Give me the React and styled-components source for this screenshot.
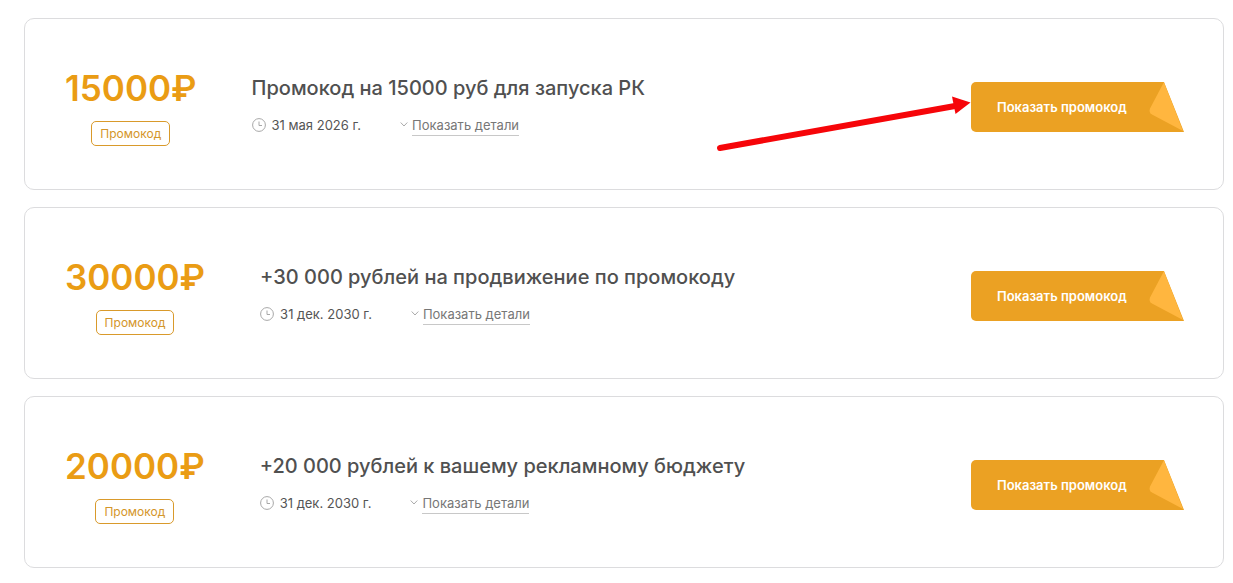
import React from "react";
import styled, { createGlobalStyle } from "styled-components";

const GlobalStyle = createGlobalStyle`
  *, *::before, *::after { box-sizing: border-box; }
  body {
    margin: 0;
    background: #fff;
    color: #505050;
    font-family: Inter, "Liberation Sans", sans-serif;
  }
`;

const List = styled.main`
  display: flex;
  flex-direction: column;
  gap: 17px;
  padding: 18px 9px 15px 24px;
`;

const Card = styled.article`
  display: flex;
  align-items: center;
  padding: 47px 39px 43px 40px;
  border: 1px solid #dcdcde;
  border-radius: 10px;
`;

const Offer = styled.div`
  display: flex;
  flex-direction: column;
  align-items: center;
  gap: 10px;
  margin-right: 55px;
`;

const Amount = styled.div`
  color: #ea9c14;
  font-size: 35px;
  font-weight: 600;
  line-height: 45px;
`;

const Badge = styled.span`
  padding: 0 8px;
  border: 1px solid #d99a2b;
  border-radius: 5px;
  color: #d4962a;
  font-size: 12px;
  line-height: 23px;
`;

const Details = styled.div`
  flex: 1;
  min-width: 0;
  padding-bottom: 2px;
`;

const Title = styled.h2`
  margin: 0 0 14px;
  font-size: 20px;
  font-weight: 500;
  line-height: 26px;
`;

const Meta = styled.div`
  display: flex;
  align-items: flex-start;
  gap: 39px;
  font-size: 13px;
  line-height: 20px;
`;

const Expiry = styled.span`
  display: flex;
  align-items: center;
  gap: 6px;
  color: #555;
`;

const Toggle = styled.button`
  display: flex;
  align-items: center;
  gap: 4px;
  padding: 0;
  border: 0;
  background: none;
  color: #777;
  font: inherit;
  cursor: pointer;
`;

const ToggleLabel = styled.span`
  border-bottom: 1px solid #c8c8c8;
`;

const Action = styled.div`
  position: relative;
  flex: none;
  margin-top: 2px;
`;

const RevealButton = styled.button`
  display: flex;
  width: 213px;
  height: 50px;
  padding: 0 0 0 26px;
  align-items: center;
  justify-content: space-between;
  border: 0;
  border-radius: 5px 0 0 5px;
  background: #eba123;
  clip-path: polygon(0 0, 193px 0, 100% 100%, 0 100%);
  color: #fff;
  font-family: inherit;
  font-size: 13px;
  font-weight: 600;
  cursor: pointer;
`;

const Pointer = styled.svg`
  position: absolute;
  right: 100%;
  top: 10px;
  pointer-events: none;
`;

const ClockIcon = () => (
  <svg width="14" height="14" viewBox="0 0 14 14" fill="none" stroke="#a8a8a8" aria-hidden="true">
    <circle cx="7" cy="7" r="6.4" />
    <path d="M7 3.5V7.5H10" />
  </svg>
);

const ChevronIcon = () => (
  <svg width="8" height="20" viewBox="0 0 8 20" fill="none" stroke="#aaa" aria-hidden="true">
    <path d="M0.7 7.5L4 11L7.3 7.5" />
  </svg>
);

const FoldedCorner = () => (
  <svg width="36" height="50" viewBox="0 0 36 50" aria-hidden="true">
    <path d="M16 0L35 49L4 32.5Q0.5 30.5 2 26.5Z" fill="#ffb63f" />
  </svg>
);

const Arrow = () => (
  <Pointer width="256" height="64" viewBox="0 0 256 64" aria-hidden="true">
    <path d="M5 56L240 14" stroke="#f60509" strokeWidth="6" strokeLinecap="round" />
    <path d="M237 4.5L255.500 10.500L240.500 22Z" fill="#f60509" />
  </Pointer>
);

const promos = [
  { amount: "15000₽", title: "Промокод на 15000 руб для запуска РК", date: "31 мая 2026 г.", pointed: true },
  { amount: "30000₽", title: "+30 000 рублей на продвижение по промокоду", date: "31 дек. 2030 г." },
  { amount: "20000₽", title: "+20 000 рублей к вашему рекламному бюджету", date: "31 дек. 2030 г." },
];

const PromoCard = ({ amount, title, date, pointed }) => (
  <Card>
    <Offer>
      <Amount>{amount}</Amount>
      <Badge>Промокод</Badge>
    </Offer>
    <Details>
      <Title>{title}</Title>
      <Meta>
        <Expiry><ClockIcon />{date}</Expiry>
        <Toggle type="button">
          <ChevronIcon />
          <ToggleLabel>Показать детали</ToggleLabel>
        </Toggle>
      </Meta>
    </Details>
    <Action>
      <RevealButton type="button">
        Показать промокод
        <FoldedCorner />
      </RevealButton>
      {pointed && <Arrow />}
    </Action>
  </Card>
);

export default function App() {
  return (
    <>
      <GlobalStyle />
      <List>
        {promos.map((promo) => <PromoCard key={promo.title} {...promo} />)}
      </List>
    </>
  );
}
